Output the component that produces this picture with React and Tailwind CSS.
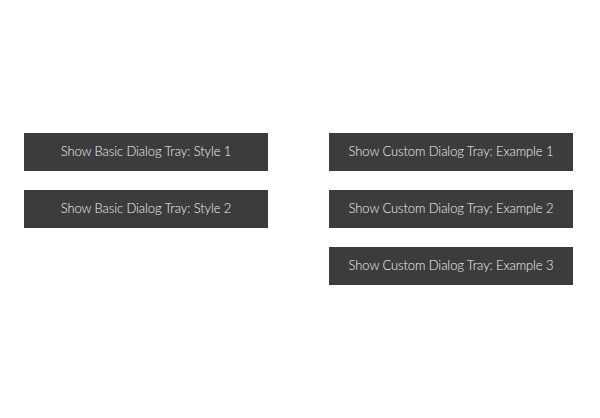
import React from "react";

const left = ["Show Basic Dialog Tray: Style 1", "Show Basic Dialog Tray: Style 2"];
const right = [
  "Show Custom Dialog Tray: Example 1",
  "Show Custom Dialog Tray: Example 2",
  "Show Custom Dialog Tray: Example 3",
];

function TrayButton({ label }) {
  return (
    <button className="w-[244px] h-[38px] bg-[#3c3c3c] text-[#f2f2f2] text-[13px] font-light tracking-[-0.1px] flex items-center justify-center">
      {label}
    </button>
  );
}

export default function App() {
  return (
    <div
      className="w-[600px] h-[418px] bg-white flex pt-[133px] pl-[24px] gap-[61px]"
      style={{ fontFamily: "Lato, 'Open Sans', sans-serif" }}
    >
      <div className="flex flex-col gap-[19px]">
        {left.map((l) => (
          <TrayButton key={l} label={l} />
        ))}
      </div>
      <div className="flex flex-col gap-[19px]">
        {right.map((l) => (
          <TrayButton key={l} label={l} />
        ))}
      </div>
    </div>
  );
}
